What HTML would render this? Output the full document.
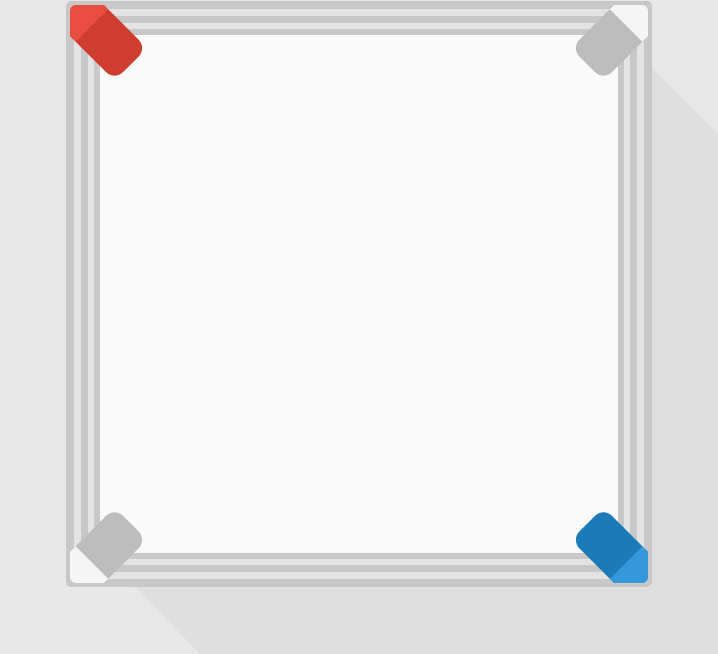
<!DOCTYPE html>
<html><head><style>html,body{margin:0;padding:0;background:#e8e8e8;width:718px;height:654px;overflow:hidden}</style></head>
<body>
<svg width="718" height="654" viewBox="0 0 718 654" xmlns="http://www.w3.org/2000/svg">
<defs>
<clipPath id="c"><rect x="70" y="5" width="300" height="300" rx="6"/></clipPath>
</defs>
<rect width="718" height="654" fill="#e8e8e8"/>
<polygon points="652,68 718,134 718,654 200,654 135,587 652,587" fill="#dfdfdf"/>
<rect x="66" y="1" width="586" height="586" rx="5" fill="#c8c8c8"/>
<rect x="74" y="9" width="570" height="570" fill="#e3e3e3"/>
<rect x="81" y="16" width="556" height="556" fill="#c8c8c8"/>
<rect x="88" y="23" width="542" height="542" fill="#e3e3e3"/>
<rect x="94" y="29" width="530" height="530" fill="#c8c8c8"/>
<rect x="100" y="35" width="518" height="518" fill="#fafafa"/>

<g clip-path="url(#c)"><g transform="translate(70,5) rotate(45)">
<rect x="-30" y="-24" width="115" height="46" rx="12" fill="#cf3d2f"/>
<rect x="-30" y="-24" width="60" height="46" fill="#e84f40"/></g></g>

<g transform="translate(718,0) scale(-1,1)"><g clip-path="url(#c)"><g transform="translate(70,5) rotate(45)">
<rect x="-30" y="-24" width="115" height="46" rx="12" fill="#bdbdbd"/>
<rect x="-30" y="-24" width="60" height="46" fill="#f5f5f5"/></g></g></g>

<g transform="translate(0,588) scale(1,-1)"><g clip-path="url(#c)"><g transform="translate(70,5) rotate(45)">
<rect x="-30" y="-24" width="115" height="46" rx="12" fill="#bdbdbd"/>
<rect x="-30" y="-24" width="60" height="46" fill="#f5f5f5"/></g></g></g>

<g transform="translate(718,588) scale(-1,-1)"><g clip-path="url(#c)"><g transform="translate(70,5) rotate(45)">
<rect x="-30" y="-24" width="115" height="46" rx="12" fill="#1b7bb9"/>
<rect x="-30" y="-24" width="60" height="46" fill="#3498db"/></g></g></g>
</svg>
</body></html>
